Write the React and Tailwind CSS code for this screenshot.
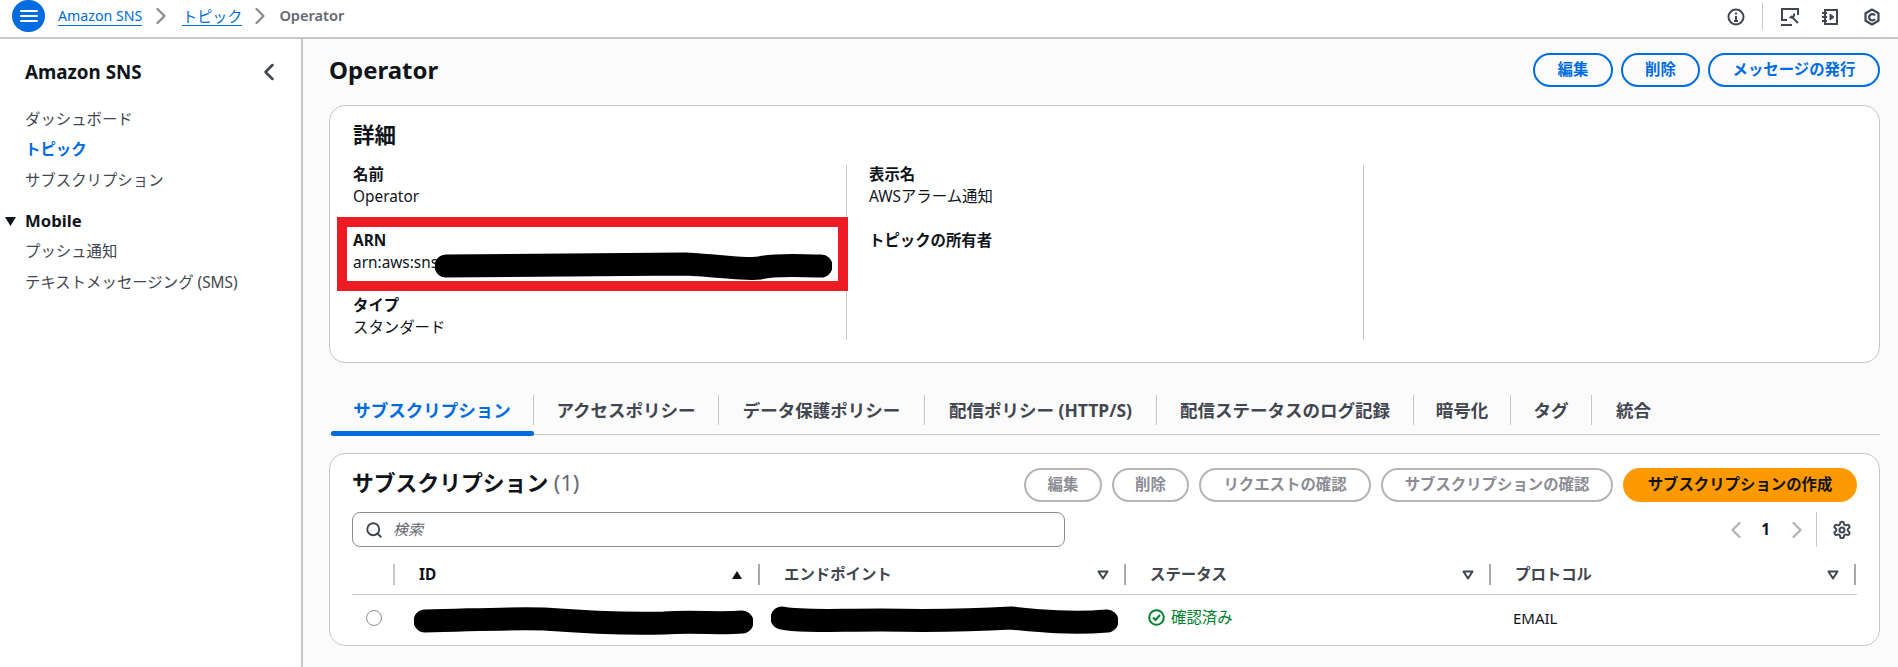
import { ChevronLeft, ChevronRight, Search } from 'lucide-react';

const FONT = 'font-["Noto_Sans","Noto_Sans_CJK_JP",sans-serif]';

const tabs = [
  { label: 'サブスクリプション', w: 'w-[203px]', active: true },
  { label: 'アクセスポリシー', w: 'w-[185px]' },
  { label: 'データ保護ポリシー', w: 'w-[206px]' },
  { label: '配信ポリシー (HTTP/S)', w: 'w-[232px]' },
  { label: '配信ステータスのログ記録', w: 'w-[257px]' },
  { label: '暗号化', w: 'w-[97px]' },
  { label: 'タグ', w: 'w-[81px]' },
  { label: '統合', w: 'w-[83px]', last: true },
];

function OutlineButton({ children, w }) {
  return (
    <button className={`${w} h-[34px] rounded-full border-2 border-[#006ce0] text-[15.4px] font-bold text-[#006ce0] leading-none`}>
      {children}
    </button>
  );
}

function DisabledButton({ children, w }) {
  return (
    <button className={`${w} h-[34px] rounded-full border-2 border-[#b4b4bb] text-[15.4px] font-bold text-[#8c8c94] leading-none`}>
      {children}
    </button>
  );
}

function Field({ label, children, className = '' }) {
  return (
    <div className={className}>
      <div className="text-[15.4px] font-bold leading-[22px] text-[#0f141a]">{label}</div>
      <div className="text-[15.4px] leading-[22px] text-[#0f141a]">{children}</div>
    </div>
  );
}

function SortDown() {
  return (
    <svg width="12" height="10" viewBox="0 0 12 10" className="shrink-0">
      <path d="M1.500 1.500h9L6 8.500z" fill="none" stroke="#424650" strokeWidth="2" strokeLinejoin="round" />
    </svg>
  );
}

function HeaderCell({ label, w, sorted }) {
  return (
    <div className={`${w} flex items-center pl-[24px] pr-[15px] h-[21px] border-r-2 border-[#a8a8b0]`}>
      <span className={`flex-1 text-[15.4px] font-bold ${sorted ? 'text-[#0f141a]' : 'text-[#424650]'}`}>{label}</span>
      {sorted ? (
        <svg width="12" height="10" viewBox="0 0 12 10" className="shrink-0">
          <path d="M6 1l5 8H1z" fill="#0f141a" />
        </svg>
      ) : (
        <SortDown />
      )}
    </div>
  );
}

// hand drawn marker strokes over the masked values
function Scribble({ className, width, d }) {
  return (
    <svg className={`absolute ${className}`} width={width} height="30" viewBox={`0 0 ${width} 30`}>
      <path d={d} fill="none" stroke="#000" strokeWidth="23" strokeLinecap="round" strokeLinejoin="round" />
    </svg>
  );
}

export default function App() {
  return (
    <div className={`${FONT} relative h-[667px] w-[1898px] overflow-hidden bg-[#fbfbfb] text-[#0f141a]`}>
      {/* Top bar */}
      <header className="flex h-[39px] items-start border-b-2 border-[#c6c6cd] bg-white">
        <div className="ml-3 flex h-[32px] w-[33px] items-center justify-center rounded-full bg-[#006ce0]">
          <svg width="18" height="14" viewBox="0 0 18 14">
            <path d="M1 2h16M1 7h16M1 12h16" stroke="#fff" strokeWidth="2" strokeLinecap="round" />
          </svg>
        </div>
        <nav className="ml-[13px] flex h-[32px] items-center text-[15px]">
          <a className="border-b border-[#006ce0] text-[14.2px] leading-[18px] text-[#006ce0]">Amazon SNS</a>
          <ChevronRight className="ml-[5px] mr-[7px] text-[#8c8c94]" size={28} strokeWidth={2} />
          <a className="border-b border-[#006ce0] leading-[18px] text-[#006ce0]">トピック</a>
          <ChevronRight className="ml-[4px] mr-[5px] text-[#8c8c94]" size={28} strokeWidth={2} />
          <span className="text-[14.6px] font-semibold text-[#656871]">Operator</span>
        </nav>
        <div className="ml-auto flex h-[33px] items-center pr-[17px] text-[#424650]">
          <svg width="18" height="18" viewBox="0 0 18 18" fill="none" stroke="currentColor" strokeWidth="2">
            <circle cx="9" cy="9" r="7.500" />
            <path d="M9 8v5M7 13h4M9 4.500v2" />
          </svg>
          <div className="mx-[17px] h-[27px] w-px bg-[#c6c6cd]" />
          <svg className="mr-[21px]" width="20" height="20" viewBox="0 0 20 20" fill="none" stroke="currentColor" strokeWidth="2">
            <path d="M7 13H2V2h16v6M1 18h11" />
            <path d="M11 9l7 7" />
            <path d="M14 6.500a3 3 0 0 1-4.500 3.500" />
          </svg>
          <svg className="mr-[24px]" width="18" height="18" viewBox="0 0 18 18" fill="none" stroke="currentColor" strokeWidth="2">
            <path d="M4 2h12v14H4zM1 5h5M1 9h5M1 13h5" />
            <path d="M9 6l4 3-4 3z" fill="currentColor" strokeWidth="1" />
          </svg>
          <svg width="18" height="18" viewBox="0 0 18 18" fill="none" stroke="currentColor" strokeWidth="2.200" strokeLinejoin="round">
            <path d="M9 1.500l6.500 3.700v7.600L9 16.500l-6.500-3.700V5.200z" />
            <path d="M12 7.500A3.200 3.200 0 1 0 12 11" />
          </svg>
        </div>
      </header>

      <div className="flex h-[628px]">
        {/* Sidebar */}
        <aside className="w-[303px] shrink-0 border-r-2 border-[#c6c6cd] bg-white">
          <div className="flex h-[46px] items-center justify-between pl-[25px] pr-[18px] pt-[20px]">
            <span className="text-[18.8px] font-bold leading-[26px]">Amazon SNS</span>
            <ChevronLeft className="text-[#424650]" size={28} strokeWidth={2.2} />
          </div>
          <ul className="mt-[20px] pl-[25px] text-[15.4px] text-[#424650]">
            <li className="h-[30px] leading-[30px]">ダッシュボード</li>
            <li className="h-[31px] leading-[30px] font-bold text-[#006ce0]">トピック</li>
            <li className="h-[30px] leading-[30px]">サブスクリプション</li>
          </ul>
          <div className="mt-[10px] flex h-[30px] items-center pl-[5px]">
            <svg width="11" height="9" viewBox="0 0 11 9" className="mr-[9px]">
              <path d="M0 0h11L5.500 9z" fill="#0f141a" />
            </svg>
            <span className="text-[16.700px] font-bold">Mobile</span>
          </div>
          <ul className="pl-[25px] text-[15.4px] text-[#424650]">
            <li className="h-[31px] leading-[31px]">プッシュ通知</li>
            <li className="h-[31px] leading-[31px]">テキストメッセージング (SMS)</li>
          </ul>
        </aside>

        {/* Main */}
        <main className="min-w-0 flex-1 pl-[26px] pr-[18px]">
          <div className="flex h-[66px] items-start justify-between pt-[14px]">
            <h1 className="text-[24px] font-bold leading-[34px]">Operator</h1>
            <div className="flex gap-[8px]">
              <OutlineButton w="w-[80px]">編集</OutlineButton>
              <OutlineButton w="w-[79px]">削除</OutlineButton>
              <OutlineButton w="w-[172px]">メッセージの発行</OutlineButton>
            </div>
          </div>

          {/* Details */}
          <section className="h-[258px] rounded-[16px] border border-[#c6c6cd] bg-white pl-[23px]">
            <h2 className="pt-[13px] text-[21.500px] font-bold leading-[32px]">詳細</h2>
            <div className="mt-[14px] flex h-[175px]">
              <div className="w-[494px] border-r border-[#c6c6cd]">
                <Field label="名前" className="-mt-[1px]">Operator</Field>
                <Field label="ARN" className="mt-[22px]">arn:aws:sns:</Field>
                <Field label="タイプ" className="mt-[21px]">スタンダード</Field>
              </div>
              <div className="w-[517px] border-r border-[#c6c6cd] pl-[22px]">
                <Field label="表示名" className="-mt-[1px]">AWSアラーム通知</Field>
                <Field label="トピックの所有者" className="mt-[22px]"> </Field>
              </div>
            </div>
          </section>

          {/* Tabs */}
          <div className="mt-[28px] flex h-[44px] border-b border-[#c6c6cd] pl-[2px]">
            {tabs.map((tab) => (
              <div key={tab.label} className={`${tab.w} relative flex h-[44px] items-start pt-[4px]`}>
                <div
                  className={`flex h-[30px] w-full items-center justify-center text-[17.500px] font-bold ${
                    tab.last ? '' : 'border-r border-[#c6c6cd]'
                  } ${tab.active ? 'text-[#006ce0]' : 'text-[#424650]'}`}
                >
                  {tab.label}
                </div>
                {tab.active && <div className="absolute bottom-[-1px] left-0 h-[5px] w-full rounded-[2px] bg-[#006ce0]" />}
              </div>
            ))}
          </div>

          {/* Subscriptions */}
          <section className="mt-[18px] h-[193px] rounded-[16px] border border-[#c6c6cd] bg-white px-[22px]">
            <div className="flex items-start pt-[14px]">
              <h2 className="text-[21.800px] font-bold leading-[30px]">
                サブスクリプション <span className="font-normal text-[#656871]">(1)</span>
              </h2>
              <div className="ml-auto flex gap-[10px]">
                <DisabledButton w="w-[78px]">編集</DisabledButton>
                <DisabledButton w="w-[77px]">削除</DisabledButton>
                <DisabledButton w="w-[172px]">リクエストの確認</DisabledButton>
                <DisabledButton w="w-[232px]">サブスクリプションの確認</DisabledButton>
                <button className="w-[234px] h-[34px] rounded-full bg-[#ff9900] text-[15.4px] font-bold leading-none text-[#0f141a]">
                  サブスクリプションの作成
                </button>
              </div>
            </div>

            <div className="mt-[10px] flex h-[35px] items-center">
              <div className="flex h-[35px] w-[713px] items-center rounded-[8px] border border-[#8c8c94] bg-white pl-[12px]">
                <Search className="text-[#424650]" size={18} strokeWidth={2.5} />
                <span className="ml-[10px] text-[15px] italic text-[#656871]">検索</span>
              </div>
              <div className="ml-auto flex h-[35px] items-center">
                <ChevronLeft className="text-[#b4b4bb]" size={28} strokeWidth={2} />
                <span className="ml-[11px] mr-[13px] text-[15.4px] font-bold">1</span>
                <ChevronRight className="text-[#b4b4bb]" size={28} strokeWidth={2} />
                <div className="ml-[5px] h-[35px] w-px bg-[#c6c6cd]" />
                <svg className="ml-[15px] mr-[5px]" width="20" height="20" viewBox="0 0 24 24" fill="none" stroke="#424650" strokeWidth="2.400" strokeLinejoin="round">
                  <path d="M12.200 2h-.4a2 2 0 0 0-2 2v.2a2 2 0 0 1-1 1.700l-.4.200a2 2 0 0 1-2 0l-.2-.1a2 2 0 0 0-2.700.7l-.2.400a2 2 0 0 0 .7 2.700l.2.100a2 2 0 0 1 1 1.700v.5a2 2 0 0 1-1 1.700l-.2.100a2 2 0 0 0-.7 2.700l.2.400a2 2 0 0 0 2.700.7l.2-.1a2 2 0 0 1 2 0l.4.200a2 2 0 0 1 1 1.700v.2a2 2 0 0 0 2 2h.4a2 2 0 0 0 2-2v-.2a2 2 0 0 1 1-1.700l.4-.200a2 2 0 0 1 2 0l.2.100a2 2 0 0 0 2.700-.7l.2-.400a2 2 0 0 0-.7-2.700l-.2-.100a2 2 0 0 1-1-1.700v-.5a2 2 0 0 1 1-1.700l.2-.100a2 2 0 0 0 .7-2.700l-.2-.400a2 2 0 0 0-2.700-.7l-.2.100a2 2 0 0 1-2 0l-.4-.200a2 2 0 0 1-1-1.700V4a2 2 0 0 0-2-2z" />
                  <circle cx="12" cy="12" r="3" />
                </svg>
              </div>
            </div>

            {/* Table */}
            <div className="mt-[17px] flex h-[31px] items-start border-b border-[#c6c6cd]">
              <div className="h-[21px] w-[43px] shrink-0 border-r-2 border-[#c6c6cd]" />
              <HeaderCell label="ID" w="w-[365px]" sorted />
              <HeaderCell label="エンドポイント" w="w-[366px]" />
              <HeaderCell label="ステータス" w="w-[365px]" />
              <HeaderCell label="プロトコル" w="w-[365px]" />
            </div>
            <div className="flex h-[46px] items-center">
              <div className="flex w-[43px] shrink-0 justify-start pl-[14px]">
                <div className="h-[16px] w-[16px] rounded-full border border-[#8c8c94] bg-white" />
              </div>
              <div className="w-[365px]" />
              <div className="w-[366px]" />
              <div className="flex w-[365px] items-center pl-[22px] text-[15.4px] text-[#00802f]">
                <svg className="mr-[6px]" width="17" height="17" viewBox="0 0 17 17" fill="none" stroke="currentColor" strokeWidth="2">
                  <circle cx="8.500" cy="8.500" r="7.300" />
                  <path d="M5 8.500l2.500 2.500 4.500-5" />
                </svg>
                確認済み
              </div>
              <div className="w-[365px] pl-[22px] text-[15px]">EMAIL</div>
            </div>
          </section>
        </main>
      </div>

      {/* Annotations drawn on top of the screenshot */}
      <div className="absolute left-[337px] top-[217px] h-[74px] w-[511px] border-[10px] border-[#ed1c24]" />
      <Scribble className="left-[435px] top-[252px]" width={397} d="M11 14C90 13 170 12 250 12C290 14 310 18 325 16C340 12 365 14 386 14" />
      <Scribble className="left-[414px] top-[607px]" width={339} d="M11 14C60 13 90 11 130 12C170 15 210 17 250 16C280 14 305 17 328 15" />
      <Scribble className="left-[771px] top-[606px]" width={347} d="M11 12C30 16 60 14 110 14C160 15 190 15 240 12C270 15 300 18 336 15" />
    </div>
  );
}
